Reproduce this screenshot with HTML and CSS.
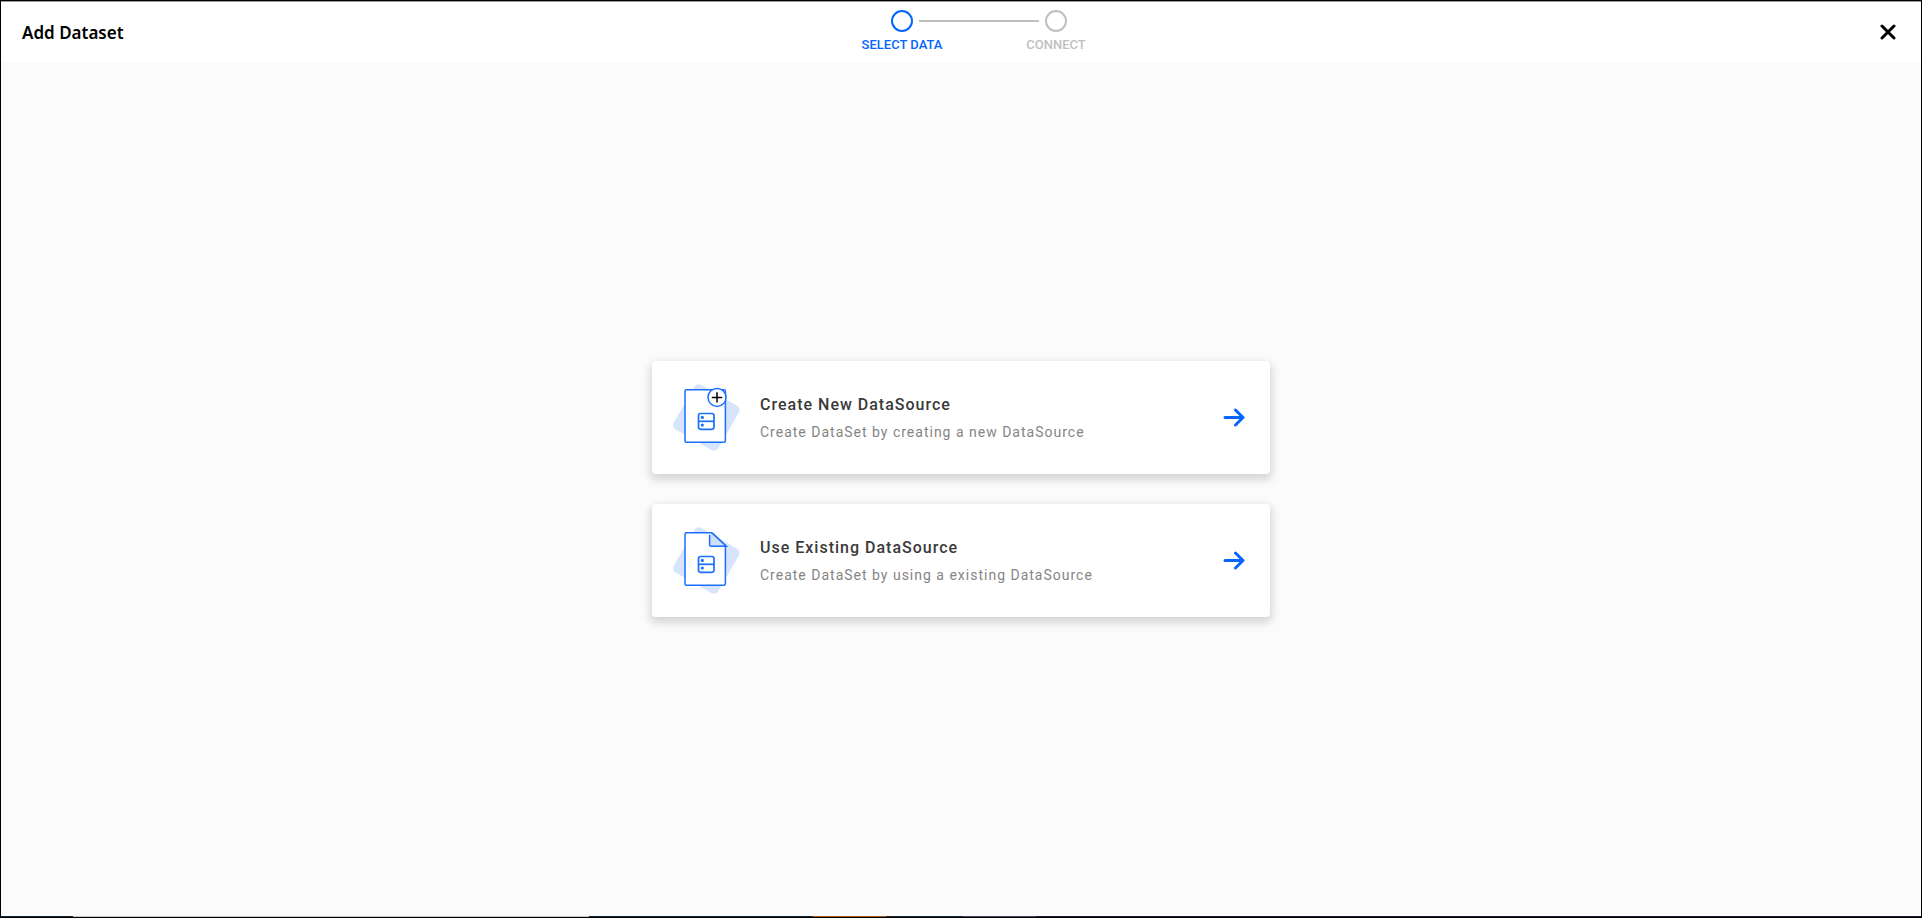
FILE: index.html
```html
<!DOCTYPE html>
<html lang="en">
<head>
    <meta charset="UTF-8">
    <meta name="viewport" content="width=device-width, initial-scale=1.0">
    <title>Add Dataset</title>
    <link rel="stylesheet" href="styles.css">
</head>
<body>
    <header class="header">
        <h1>Add Dataset</h1>
        <ol class="steps">
            <li class="step active">
                <span class="circle"></span>
                <span class="label">SELECT DATA</span>
            </li>
            <li class="line" role="presentation"></li>
            <li class="step">
                <span class="circle"></span>
                <span class="label">CONNECT</span>
            </li>
        </ol>
        <button type="button" class="close" aria-label="Close">
            <svg width="16" height="16" viewBox="0 0 16 16"><path d="M2 2L14 14M14 2L2 14"/></svg>
        </button>
    </header>

    <main class="content">
        <a class="card" href="#create">
            <svg class="card-icon" viewBox="0 0 71 71">
                <rect class="tile" x="9.7" y="9.9" width="51.3" height="51.3" rx="5" transform="rotate(30 35.3 35.5)"/>
                <rect class="page" x="14" y="7.7" width="40.4" height="52.6" rx="1.5"/>
                <rect class="server" x="27.5" y="31.5" width="15.5" height="15.8" rx="2.2"/>
                <path class="server" d="M27.5 39.3H43"/>
                <circle class="dot" cx="31.3" cy="35.4" r="1.6"/>
                <circle class="dot" cx="31.3" cy="43" r="1.6"/>
                <circle class="page" cx="46" cy="15.4" r="9"/>
                <path class="plus" d="M46 10.8V20M41.4 15.4H50.6"/>
            </svg>
            <div class="card-text">
                <h2>Create New DataSource</h2>
                <p>Create DataSet by creating a new DataSource</p>
            </div>
            <svg class="arrow" width="22" height="20" viewBox="0 0 22 20"><path d="M2 9.5H20M12.5 2L20 9.5L12.5 17"/></svg>
        </a>

        <a class="card" href="#existing">
            <svg class="card-icon" viewBox="0 0 71 71">
                <rect class="tile" x="9.7" y="9.9" width="51.3" height="51.3" rx="5" transform="rotate(30 35.3 35.5)"/>
                <path class="page" d="M15.5 7.7H39.5Q40.7 7.7 41.5 8.4L54.4 20.5V58.8Q54.4 60.3 52.9 60.3H15.5Q14 60.3 14 58.8V9.2Q14 7.7 15.5 7.7Z"/>
                <path class="fold" d="M38.6 10.3V19.8Q38.6 21.3 40.1 21.3H55.3L41.5 8.4"/>
                <rect class="server" x="27.5" y="31.5" width="15.5" height="15.8" rx="2.2"/>
                <path class="server" d="M27.5 39.3H43"/>
                <circle class="dot" cx="31.3" cy="35.4" r="1.6"/>
                <circle class="dot" cx="31.3" cy="43" r="1.6"/>
            </svg>
            <div class="card-text">
                <h2>Use Existing DataSource</h2>
                <p>Create DataSet by using a existing DataSource</p>
            </div>
            <svg class="arrow" width="22" height="20" viewBox="0 0 22 20"><path d="M2 9.5H20M12.5 2L20 9.5L12.5 17"/></svg>
        </a>
    </main>

    <footer class="strip"></footer>
</body>
</html>
```
FILE: styles.css
```css
* {
    box-sizing: border-box;
}

body {
    margin: 0;
    min-height: 100vh;
    display: flex;
    flex-direction: column;
    border: 1px solid #000;
    background-color: #fbfbfb;
    font-family: Roboto, sans-serif;
}

/* Header */
.header {
    display: grid;
    grid-template-columns: 1fr auto 1fr;
    align-items: center;
    height: 61px;
    padding: 0 21px;
    border-top: 1px solid #999;
    background-color: #fff;
}

.header h1 {
    margin: 2px 0 0;
    font-family: "Noto Sans", sans-serif;
    font-size: 17px;
    font-weight: 600;
    line-height: 24px;
    color: #000;
}

.steps {
    display: flex;
    align-items: flex-start;
    align-self: start;
    margin: 0;
    padding: 8px 0 0 36px;
    list-style: none;
}

.step {
    display: flex;
    flex-direction: column;
    align-items: center;
    gap: 5px;
    width: 34px;
    color: #bfbfbf;
}

.circle {
    width: 22px;
    height: 22px;
    border: 2px solid #bfbfbf;
    border-radius: 50%;
}

.label {
    font-size: 13px;
    font-weight: 500;
    line-height: 16px;
    white-space: nowrap;
}

.step.active {
    color: #0565ff;
}

.step.active .circle {
    border-color: #0565ff;
}

.line {
    width: 120px;
    height: 2px;
    margin-top: 10px;
    background-color: #bfbfbf;
}

.close {
    justify-self: end;
    display: flex;
    padding: 4px;
    border: none;
    background: none;
    cursor: pointer;
}

.close path {
    fill: none;
    stroke: #000;
    stroke-width: 3;
    stroke-linecap: round;
}

/* Options */
.content {
    flex: 1;
    display: flex;
    flex-direction: column;
    align-items: center;
    justify-content: center;
    gap: 30px;
}

.card {
    display: flex;
    align-items: center;
    width: 100%;
    max-width: 618px;
    padding: 21px 25px 21px 19px;
    border-radius: 4px;
    background-color: #fff;
    box-shadow: 0 4px 8px 2px rgba(0, 0, 0, 0.15);
    text-decoration: none;
}

.card-icon {
    width: 71px;
    height: 71px;
}

.card-text {
    flex: 1;
    margin-left: 18px;
    padding-top: 1px;
}

.card-text h2 {
    margin: 0 0 7px;
    font-size: 16px;
    font-weight: 500;
    line-height: 20px;
    letter-spacing: 1px;
    color: #3a3a3a;
}

.card-text p {
    margin: 0;
    font-size: 14px;
    line-height: 20px;
    letter-spacing: 1px;
    color: #858585;
}

.tile {
    fill: #d6e4fc;
}

.page {
    fill: #fff;
    stroke: #1a6fff;
    stroke-width: 1.5;
}

.fold {
    fill: #d0dffa;
    stroke: #1a6fff;
    stroke-width: 1.5;
    stroke-linecap: round;
}

.server {
    fill: none;
    stroke: #1a6fff;
    stroke-width: 1.7;
}

.dot {
    fill: #1a6fff;
}

.plus {
    stroke: #000;
    stroke-width: 1.5;
    stroke-linecap: round;
}

.arrow path {
    fill: none;
    stroke: #0565ff;
    stroke-width: 3;
    stroke-linecap: round;
    stroke-linejoin: round;
}

/* Bottom edge */
.strip {
    height: 1px;
    background: linear-gradient(to right, #0f2530 72px, #c4c4c4 72px 588px, #14262f 588px 812px, #a85a1e 812px 885px, #1a2833 885px 962px, #3f4a56 962px 1035px, #141d2b 1035px);
}
```
